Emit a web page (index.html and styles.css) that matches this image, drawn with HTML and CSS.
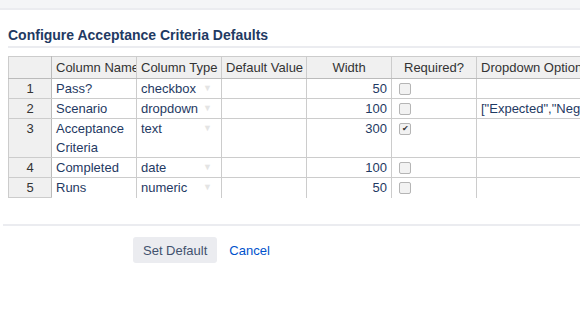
FILE: index.html
```html
<!DOCTYPE html>
<html lang="en">
<head>
  <meta charset="UTF-8" />
  <title>Configure Acceptance Criteria Defaults</title>
  <link rel="stylesheet" href="styles.css">
</head>
<body>
  <div class="top-strip"></div>

  <div class="page">
    <h2 class="section-title">Configure Acceptance Criteria Defaults</h2>

    <div class="grid-wrapper">
      <table class="criteria-grid">
        <colgroup>
          <col class="col-row" />
          <col class="col-std" />
          <col class="col-std" />
          <col class="col-std" />
          <col class="col-std" />
          <col class="col-std" />
          <col class="col-wide" />
        </colgroup>
        <thead>
          <tr>
            <th class="corner"></th>
            <th class="left">Column Name</th>
            <th>Column Type</th>
            <th>Default Value</th>
            <th>Width</th>
            <th>Required?</th>
            <th class="left">Dropdown Options</th>
          </tr>
        </thead>
        <tbody>
          <tr>
            <th class="row-num">1</th>
            <td>Pass?</td>
            <td class="type-cell">checkbox<span class="arrow">&#9660;</span></td>
            <td></td>
            <td class="num">50</td>
            <td><span class="check"></span></td>
            <td></td>
          </tr>
          <tr>
            <th class="row-num">2</th>
            <td>Scenario</td>
            <td class="type-cell">dropdown<span class="arrow">&#9660;</span></td>
            <td></td>
            <td class="num">100</td>
            <td><span class="check"></span></td>
            <td class="nowrap">["Expected","Negative"]</td>
          </tr>
          <tr>
            <th class="row-num">3</th>
            <td>Acceptance Criteria</td>
            <td class="type-cell">text<span class="arrow">&#9660;</span></td>
            <td></td>
            <td class="num">300</td>
            <td><span class="check checked">&#10004;</span></td>
            <td></td>
          </tr>
          <tr>
            <th class="row-num">4</th>
            <td>Completed</td>
            <td class="type-cell">date<span class="arrow">&#9660;</span></td>
            <td></td>
            <td class="num">100</td>
            <td><span class="check"></span></td>
            <td></td>
          </tr>
          <tr class="last-row">
            <th class="row-num">5</th>
            <td>Runs</td>
            <td class="type-cell">numeric<span class="arrow">&#9660;</span></td>
            <td></td>
            <td class="num">50</td>
            <td><span class="check"></span></td>
            <td></td>
          </tr>
        </tbody>
      </table>
    </div>

    <div class="form-footer">
      <button class="default-btn">Set Default</button>
      <a href="#" class="cancel-link">Cancel</a>
    </div>
  </div>
</body>
</html>
```
FILE: styles.css
```css
body {
  margin: 0;
  font-family: 'Liberation Sans', Arial, sans-serif;
  background-color: #fff;
  color: #172b4d;
  overflow: hidden;
}
.top-strip {
  height: 8px;
  background-color: #f4f5f7;
  border-bottom: 2px solid #ebecf0;
}
.page {
  padding: 0 0 0 8px;
}
.section-title {
  margin: 17px 0 0;
  padding-bottom: 3px;
  font-size: 14px;
  font-weight: bold;
  color: #1f3a63;
  border-bottom: 2px solid #ebecf0;
  white-space: nowrap;
}
.grid-wrapper {
  margin-top: 8px;
  overflow: hidden;
  padding-bottom: 6px;
}
.criteria-grid {
  border-collapse: collapse;
  table-layout: fixed;
  width: 612px;
  font-size: 13px;
}
.col-row {
  width: 43px;
}
.col-std {
  width: 85px;
}
.col-wide {
  width: 144px;
}
.criteria-grid th,
.criteria-grid td {
  border: 1px solid #ccc;
  height: 19px;
  padding: 0 4px;
  line-height: 19px;
  vertical-align: top;
  overflow: hidden;
  white-space: nowrap;
}
.criteria-grid thead th {
  background-color: #f0f0f0;
  color: #333;
  font-weight: normal;
  height: 21px;
  line-height: 21px;
  text-align: center;
  text-overflow: clip;
  border-bottom: 1px solid #bbb;
}
.criteria-grid thead th.left {
  text-align: left;
}
.criteria-grid td {
  color: #1f3a63;
  white-space: normal;
}
.criteria-grid td.nowrap {
  white-space: nowrap;
}
.criteria-grid .row-num {
  background-color: #f0f0f0;
  color: #333;
  font-weight: normal;
  text-align: center;
  border-right: 1px solid #bbb;
  box-shadow: 3px 0 3px -1px rgba(0, 0, 0, 0.18);
}
.criteria-grid .corner {
  border-right: 1px solid #bbb;
}
.criteria-grid .last-row .row-num {
  box-shadow: 3px 3px 3px -1px rgba(0, 0, 0, 0.2);
}
.criteria-grid .last-row td {
  border-bottom: none;
}
.criteria-grid tr td:last-child {
  border-right: none;
}
.type-cell {
  position: relative;
}
.arrow {
  position: absolute;
  right: 9px;
  top: 0;
  font-size: 9px;
  color: #e4e4e4;
}
.num {
  text-align: right;
}
.check {
  display: inline-block;
  width: 10px;
  height: 10px;
  margin: 4px 0 0 3px;
  border: 1px solid #b5b5b5;
  border-radius: 2px;
  background-color: #f2f2f2;
  vertical-align: top;
  font-size: 8px;
  line-height: 10px;
  text-align: center;
  color: #333;
}
.form-footer {
  margin: 20px 0 0 -5px;
  padding-top: 11px;
  border-top: 2px solid #ebecf0;
  padding-left: 130px;
  display: flex;
  align-items: center;
  gap: 12px;
}
.default-btn {
  font-family: inherit;
  font-size: 13px;
  background-color: #ebecf0;
  color: #42526e;
  border: none;
  border-radius: 3px;
  height: 26px;
  padding: 0 10px;
}
.cancel-link {
  font-size: 13px;
  color: #0052cc;
  text-decoration: none;
}
```
